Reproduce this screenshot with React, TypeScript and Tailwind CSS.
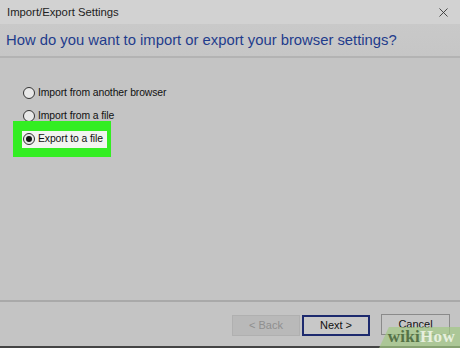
import { X } from "lucide-react";

const options = [
  { label: "Import from another browser", checked: false },
  { label: "Import from a file", checked: false },
  { label: "Export to a file", checked: true },
];

const Radio = ({ checked }: { checked: boolean }) => (
  <span className="w-[12px] h-[12px] rounded-full border border-[#333] bg-[#e8e8e8] flex items-center justify-center shrink-0">
    {checked && <span className="w-[6px] h-[6px] rounded-full bg-[#111]" />}
  </span>
);

export default function App() {
  return (
    <div
      className="relative w-[460px] h-[348px] overflow-hidden bg-[#c4c4c4] flex flex-col"
      style={{ fontFamily: "'Liberation Sans', Arial, sans-serif" }}
    >
      {/* title bar */}
      <div className="h-[24px] bg-[#d2d2d2] flex items-center justify-between pl-[7px] pr-[9px] text-[11.3px] text-[#222]">
        <span>Import/Export Settings</span>
        <X className="w-[15px] h-[15px] text-[#333]" strokeWidth={1.4} />
      </div>

      {/* header */}
      <div className="h-[34px] bg-gradient-to-b from-[#c9c9c9] to-[#c6c6c6] flex items-center pl-[6px] border-b-2 border-[#b3b3b3]">
        <span className="text-[14.8px] text-[#1f3c8c]">
          How do you want to import or export your browser settings?
        </span>
      </div>

      {/* options */}
      <div className="flex-1 flex flex-col pl-[23px] pt-[28px] gap-[9px] text-[10.4px] text-[#111] tracking-[-0.1px]">
        {options.map((o) =>
          o.checked ? (
            <div key={o.label} className="-my-[11px] -ml-[10px] w-[98px] h-[36px] bg-[#33ee22] flex items-center pl-[9px]">
              <div className="flex items-center gap-[3px] bg-[#f2f4f0] h-[17px] pr-[4px] pl-[1px] whitespace-nowrap">
                <Radio checked />
                <span>{o.label}</span>
              </div>
            </div>
          ) : (
            <div key={o.label} className="flex items-center gap-[3px] h-[14px] whitespace-nowrap">
              <Radio checked={false} />
              <span>{o.label}</span>
            </div>
          )
        )}
      </div>

      {/* footer */}
      <div className="h-[46px] border-t-2 border-[#a9a9a9] flex items-start justify-end pt-[13px] pr-[10px] text-[11px]">
        <button className="w-[68px] h-[21px] bg-[#b9b9b9] border border-[#b0b0b0] text-[#8f8f8f]">&lt; Back</button>
        <button className="ml-[2px] w-[68px] h-[21px] bg-[#c8c8c8] border-2 border-[#1d2a6e] text-[#111]">Next &gt;</button>
        <button className="ml-[11px] w-[69px] h-[21px] bg-[#c6c6c6] border border-[#8a8a8a] text-[#111] -mt-[1px]">Cancel</button>
      </div>
      <div className="h-[2px] bg-[#444]" />

      {/* watermark */}
      <div className="absolute right-[-12px] bottom-0 w-[88px] h-[21px] bg-[#a3c984]/70 -skew-x-[25deg]" />
      <div className="absolute right-[5px] bottom-[3px] text-[17px] font-bold leading-none tracking-[0.3px] opacity-90" style={{ fontFamily: "'Liberation Serif', serif" }}>
        <span className="text-[#4c6a3f]">wiki</span>
        <span className="text-[#eef5e6]">How</span>
      </div>
    </div>
  );
}
